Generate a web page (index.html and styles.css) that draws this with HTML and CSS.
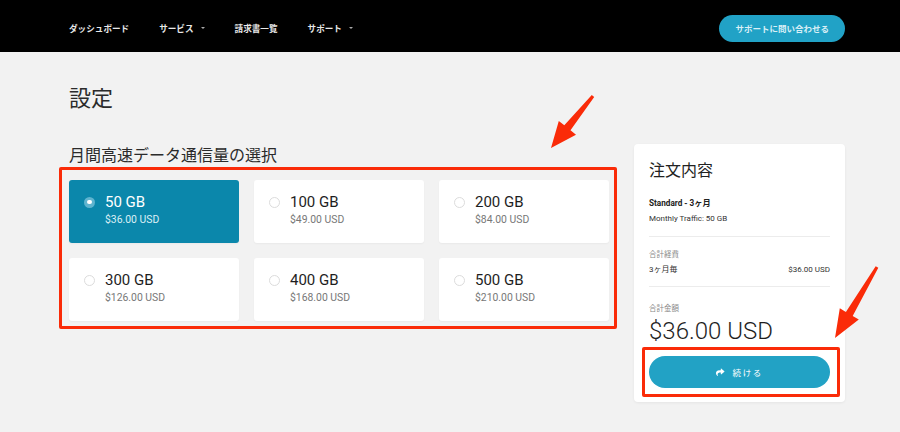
FILE: index.html
```html
<!DOCTYPE html>
<html lang="ja">
<head>
<meta charset="utf-8">
<title>設定</title>
<link rel="stylesheet" href="styles.css">
</head>
<body>
<header class="topbar">
  <nav class="nav">
    <a class="nav-item">ダッシュボード</a>
    <a class="nav-item">サービス<span class="caret"></span></a>
    <a class="nav-item">請求書一覧</a>
    <a class="nav-item">サポート<span class="caret"></span></a>
  </nav>
  <a class="btn-support">サポートに問い合わせる</a>
</header>

<main class="main">
  <h1 class="page-title">設定</h1>
  <div class="layout">
    <section class="plans">
      <h2 class="section-title">月間高速データ通信量の選択</h2>
      <div class="plan-grid">
        <div class="plan is-selected">
          <span class="radio"></span>
          <div class="plan-text">
            <div class="plan-size">50 GB</div>
            <div class="plan-price">$36.00 USD</div>
          </div>
        </div>
        <div class="plan">
          <span class="radio"></span>
          <div class="plan-text">
            <div class="plan-size">100 GB</div>
            <div class="plan-price">$49.00 USD</div>
          </div>
        </div>
        <div class="plan">
          <span class="radio"></span>
          <div class="plan-text">
            <div class="plan-size">200 GB</div>
            <div class="plan-price">$84.00 USD</div>
          </div>
        </div>
        <div class="plan">
          <span class="radio"></span>
          <div class="plan-text">
            <div class="plan-size">300 GB</div>
            <div class="plan-price">$126.00 USD</div>
          </div>
        </div>
        <div class="plan">
          <span class="radio"></span>
          <div class="plan-text">
            <div class="plan-size">400 GB</div>
            <div class="plan-price">$168.00 USD</div>
          </div>
        </div>
        <div class="plan">
          <span class="radio"></span>
          <div class="plan-text">
            <div class="plan-size">500 GB</div>
            <div class="plan-price">$210.00 USD</div>
          </div>
        </div>
        <div class="annot-box annot-grid"></div>
      </div>
    </section>

    <aside class="order">
      <h3 class="order-title">注文内容</h3>
      <div class="order-plan">Standard - 3ヶ月</div>
      <div class="order-traffic">Monthly Traffic: 50 GB</div>
      <div class="divider"></div>
      <div class="order-label">合計経費</div>
      <div class="order-row"><span>3ヶ月毎</span><span>$36.00 USD</span></div>
      <div class="divider divider-2"></div>
      <div class="order-label order-label-total">合計金額</div>
      <div class="order-total">$36.00 USD</div>
      <div class="continue-wrap">
        <a class="btn-continue">
          <svg class="share-icon" viewBox="0 0 512 512" aria-hidden="true"><path d="M503.7 189.8L327.7 37.9C312.3 24.5 288 35.3 288 56v80.1C127.4 137.9 0 170.1 0 322.3c0 61.4 39.6 122.3 83.3 154.1 13.7 9.9 33.1-2.5 28.1-18.6C66.1 312.8 132.9 274.3 288 272.1V360c0 20.7 24.3 31.5 39.7 18.2l176-152c11.1-9.6 11.1-26.8 0-36.4z"/></svg>
          <span>続ける</span>
        </a>
        <div class="annot-box annot-btn"></div>
      </div>
    </aside>
  </div>
</main>

<svg class="annot-arrows" viewBox="0 0 900 432" aria-hidden="true">
  <polygon points="551,148 576,134.7 570.5,130.3 594.2,96.9 591.8,95.1 564.3,125.3 558.8,120.9"/>
  <polygon points="835,338 858.8,319.5 852.7,315.9 878.3,267.8 875.7,266.2 845.9,311.9 839.8,308.3"/>
</svg>
</body>
</html>
```

FILE: styles.css
```css
* { box-sizing: border-box; }

html, body {
  margin: 0;
  padding: 0;
}

body {
  width: 900px;
  height: 432px;
  overflow: hidden;
  position: relative;
  background: #f2f2f2;
  font-family: Roboto, "Noto Sans CJK JP", sans-serif;
  color: #222;
}

/* ---------- top bar ---------- */
.topbar {
  height: 52px;
  background: #000;
  display: flex;
  align-items: center;
  justify-content: space-between;
  padding: 4px 55px 0 69px;
}

.nav {
  display: flex;
  align-items: center;
  gap: 30px;
}

.nav-item {
  font-family: "Noto Sans CJK JP", sans-serif;
  font-size: 8.6px;
  font-weight: 700;
  color: #e8e8e8;
  display: flex;
  align-items: center;
  line-height: 12px;
}

.caret {
  display: inline-block;
  margin-left: 7px;
  width: 0;
  height: 0;
  border-left: 2px solid transparent;
  border-right: 2px solid transparent;
  border-top: 2.5px solid #aaa;
}

.btn-support {
  height: 27px;
  padding: 0 16px;
  border-radius: 14px;
  background: #21a2c6;
  color: #d9eff6;
  font-family: "Noto Sans CJK JP", sans-serif;
  font-size: 8.5px;
  font-weight: 700;
  display: flex;
  align-items: center;
}

/* ---------- main ---------- */
.main {
  padding: 0 55px 0 69px;
}

.page-title {
  margin: 31px 0 0;
  font-family: "Noto Sans CJK JP", sans-serif;
  font-size: 22px;
  line-height: 26px;
  font-weight: 400;
  color: #2b2b2b;
}

.layout {
  margin-top: 35px;
  display: flex;
  align-items: flex-start;
  gap: 25px;
}

.plans {
  width: 540px;
}

.section-title {
  margin: 0 0 16px;
  font-family: "Noto Sans CJK JP", sans-serif;
  font-size: 16px;
  line-height: 20px;
  font-weight: 400;
  color: #2b2b2b;
}

.plan-grid {
  position: relative;
  display: grid;
  grid-template-columns: repeat(3, 170px);
  grid-auto-rows: 63px;
  gap: 15px;
}

.plan {
  background: #fff;
  border-radius: 3px;
  box-shadow: 0 1px 2px rgba(0, 0, 0, 0.04);
  display: flex;
  align-items: flex-start;
  gap: 10px;
  padding: 13px 15px;
}

.radio {
  position: relative;
  flex: none;
  width: 11px;
  height: 11px;
  margin-top: 3.5px;
  border-radius: 50%;
  border: 1px solid #dcdcdc;
  background: #fff;
}

.plan-size {
  font-size: 15px;
  line-height: 18px;
  color: #1e1e1e;
}

.plan-price {
  margin-top: 2px;
  font-size: 10.4px;
  line-height: 14px;
  color: #777;
}

.plan.is-selected {
  background: #0b87ab;
}

.plan.is-selected .plan-size { color: #fff; }
.plan.is-selected .plan-price { color: #dcf0f6; }

.plan.is-selected .radio {
  border: none;
  background: #5fb4cf;
}

.plan.is-selected .radio::after {
  content: "";
  position: absolute;
  left: 3.25px;
  top: 3.25px;
  width: 4.5px;
  height: 4.5px;
  border-radius: 50%;
  background: #fff;
}

/* ---------- order summary ---------- */
.order {
  width: 211px;
  background: #fff;
  border-radius: 4px;
  box-shadow: 0 1px 3px rgba(0, 0, 0, 0.06);
  padding: 13px 15px 14px;
}

.order-title {
  margin: 0;
  font-family: "Noto Sans CJK JP", sans-serif;
  font-size: 16px;
  line-height: 24px;
  font-weight: 400;
  color: #222;
}

.order-plan {
  margin-top: 15px;
  font-size: 8.2px;
  line-height: 15px;
  font-weight: 700;
  color: #222;
}

.order-traffic {
  font-size: 8px;
  line-height: 15px;
  color: #333;
}

.divider {
  margin-top: 10px;
  height: 0;
  border-top: 1px solid #ececec;
}

.divider-2 {
  margin-top: 9px;
}

.order-label {
  margin-top: 10.5px;
  font-family: "Noto Sans CJK JP", sans-serif;
  font-size: 7.5px;
  line-height: 12px;
  color: #888;
}

.order-label-total {
  margin-top: 15.5px;
}

.order-row {
  margin-top: 3px;
  display: flex;
  justify-content: space-between;
  font-size: 8px;
  line-height: 14px;
  color: #333;
}

.order-total {
  margin-top: 2.5px;
  font-size: 24px;
  line-height: 28px;
  font-weight: 300;
  color: #1e1e1e;
}

.continue-wrap {
  position: relative;
  margin-top: 11.5px;
}

.btn-continue {
  height: 32px;
  border-radius: 16px;
  background: #22a2c5;
  color: #fff;
  display: flex;
  align-items: center;
  justify-content: center;
  gap: 8px;
  font-family: "Noto Sans CJK JP", sans-serif;
  font-size: 8.5px;
  letter-spacing: 1.6px;
}

.share-icon {
  width: 8.5px;
  height: 8.5px;
  fill: #fff;
}

/* ---------- annotations ---------- */
.annot-box {
  position: absolute;
  border: 3px solid #fa2b08;
  border-radius: 2px;
  pointer-events: none;
}

.annot-grid {
  top: -13px;
  left: -10.5px;
  right: -8px;
  bottom: -8px;
}

.annot-btn {
  top: -9.3px;
  bottom: -9.3px;
  left: -7.5px;
  right: -10px;
}

.annot-arrows {
  position: absolute;
  top: 0;
  left: 0;
  width: 900px;
  height: 432px;
  fill: #fa2b08;
  pointer-events: none;
}
```
